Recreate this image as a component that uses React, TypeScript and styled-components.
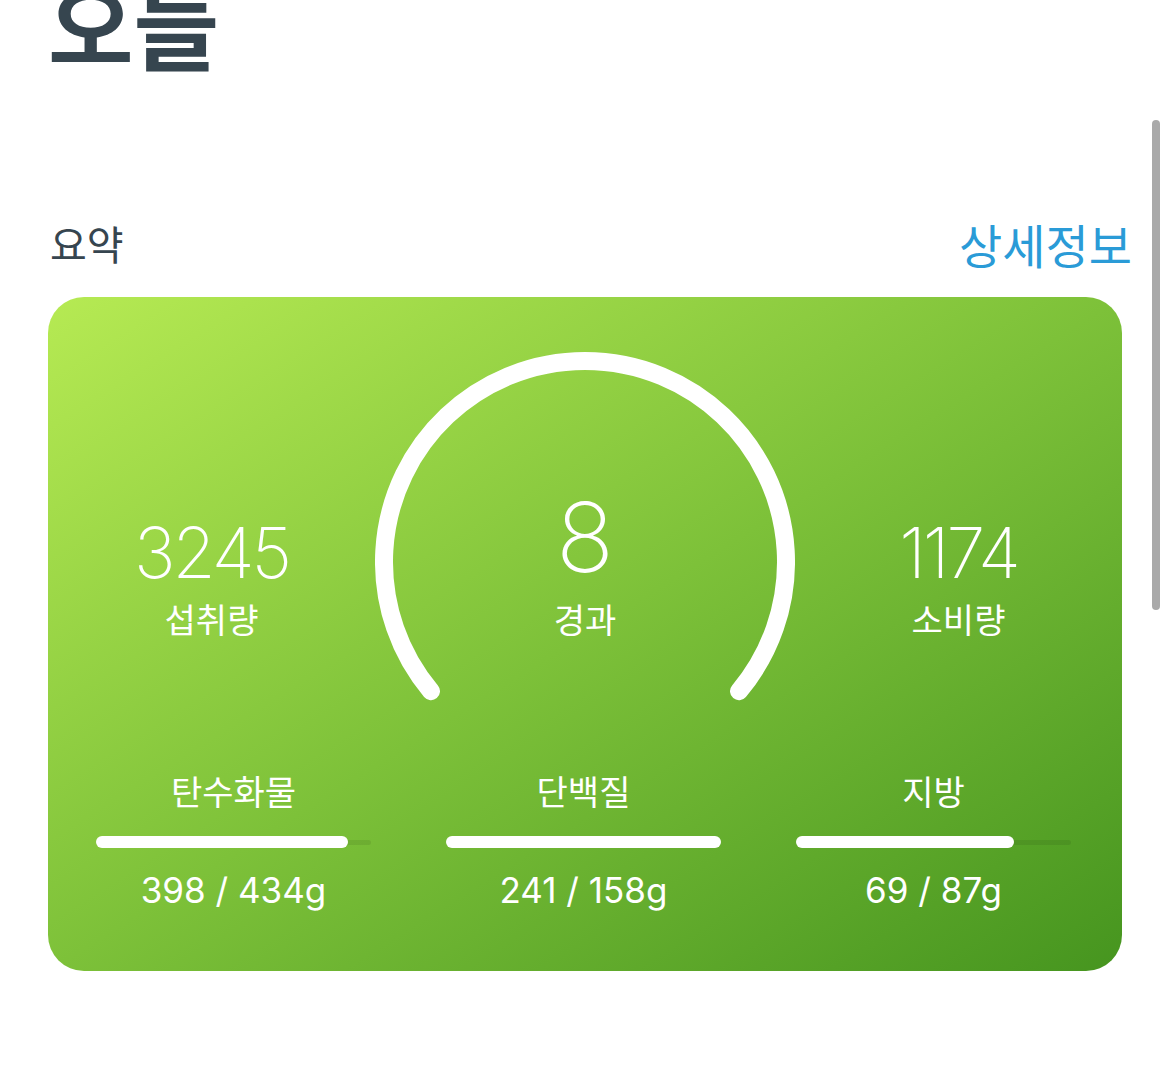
import styled, { createGlobalStyle } from 'styled-components';

const MACROS = [
  { label: '탄수화물', value: 398, goal: 434 },
  { label: '단백질', value: 241, goal: 158 },
  { label: '지방', value: 69, goal: 87 },
];

const GlobalStyle = createGlobalStyle`
  html, body {
    margin: 0;
    padding: 0;
    background: #ffffff;
    overflow: hidden;
  }
  body {
    font-family: Inter, 'Noto Sans CJK KR', sans-serif;
  }
`;

const Gauge = () => (
  <GaugeSvg width={420} height={350} viewBox="0 0 420 350">
    <path
      d="M 56 339.2 A 201 201 0 1 1 364 339.2"
      fill="none"
      stroke="#ffffff"
      strokeWidth={18}
      strokeLinecap="round"
    />
  </GaugeSvg>
);

const App = () => {
  return (
    <>
      <GlobalStyle />
      <Page>
        <Title>오늘</Title>
        <SectionHeader>
          <SectionTitle>요약</SectionTitle>
          <DetailLink>상세정보</DetailLink>
        </SectionHeader>
        <SummaryCard>
          <TopRow>
            <Stat $offset={166}>
              <StatNumber>3245</StatNumber>
              <StatLabel>섭취량</StatLabel>
            </Stat>
            <GaugeBox>
              <Gauge />
              <Stat $offset={137}>
                <StatNumber $big>8</StatNumber>
                <StatLabel>경과</StatLabel>
              </Stat>
            </GaugeBox>
            <Stat $offset={166}>
              <StatNumber>1174</StatNumber>
              <StatLabel>소비량</StatLabel>
            </Stat>
          </TopRow>
          <MacroGrid>
            {MACROS.map((m) => (
              <Macro key={m.label}>
                <MacroLabel>{m.label}</MacroLabel>
                <Track>
                  <Fill style={{ width: `${Math.min(100, (m.value / m.goal) * 100)}%` }} />
                </Track>
                <MacroValue>
                  {m.value} / {m.goal}g
                </MacroValue>
              </Macro>
            ))}
          </MacroGrid>
        </SummaryCard>
      </Page>
      <ScrollIndicator />
    </>
  );
};

export default App;

const Page = styled.main`
  padding: 0 48px;
  display: flex;
  flex-direction: column;
`;

const Title = styled.h1`
  margin: -22px 0 0 0;
  font-family: 'Noto Sans CJK KR', sans-serif;
  font-size: 93px;
  line-height: 92px;
  font-weight: 700;
  color: #36454f;
`;

const SectionHeader = styled.div`
  margin-top: 145px;
  display: flex;
  align-items: center;
  justify-content: space-between;
  height: 56px;
`;

const SectionTitle = styled.h2`
  margin: 0 0 0 2px;
  font-family: 'Noto Sans CJK KR', sans-serif;
  font-size: 40px;
  font-weight: 400;
  color: #36454f;
`;

const DetailLink = styled.a`
  margin-right: -10px;
  font-family: 'Noto Sans CJK KR', sans-serif;
  font-size: 47px;
  font-weight: 400;
  color: #2a9bd7;
  cursor: pointer;
`;

const SummaryCard = styled.section`
  margin-top: 26px;
  border-radius: 36px;
  background: linear-gradient(to bottom right, #b6ea53 0%, #7dc139 50%, #46951f 100%);
  padding: 55px 0 61px;
  color: #ffffff;
`;

const TopRow = styled.div`
  display: flex;
  align-items: flex-start;
`;

const GaugeBox = styled.div`
  position: relative;
  width: 420px;
  height: 350px;
  flex: none;
  display: flex;
  justify-content: center;
`;

const GaugeSvg = styled.svg`
  position: absolute;
  inset: 0;
`;

const Stat = styled.div<{ $offset: number }>`
  position: relative;
  flex: 1;
  padding-top: ${(p) => p.$offset}px;
  display: flex;
  flex-direction: column;
  align-items: center;
`;

const StatNumber = styled.div<{ $big?: boolean }>`
  font-family: Inter, sans-serif;
  font-weight: 200;
  font-size: ${(p) => (p.$big ? 96 : 70)}px;
  line-height: 1;
  letter-spacing: ${(p) => (p.$big ? 0 : -3)}px;
  margin-bottom: ${(p) => (p.$big ? 14 : 11)}px;
`;

const StatLabel = styled.div`
  font-family: 'Noto Sans CJK KR', sans-serif;
  font-size: 34px;
  line-height: 40px;
  font-weight: 400;
`;

const MacroGrid = styled.div`
  margin-top: 69px;
  padding: 0 51px 0 48px;
  display: grid;
  grid-template-columns: repeat(3, 1fr);
  column-gap: 75px;
`;

const Macro = styled.div`
  display: flex;
  flex-direction: column;
  align-items: center;
`;

const MacroLabel = styled.div`
  font-family: 'Noto Sans CJK KR', sans-serif;
  font-size: 34px;
  line-height: 40px;
  font-weight: 400;
`;

const Track = styled.div`
  position: relative;
  margin-top: 25px;
  width: 100%;
  height: 12px;
  display: flex;
  align-items: center;
  &::before {
    content: '';
    width: 100%;
    height: 5px;
    border-radius: 3px;
    background: rgba(0, 0, 0, 0.08);
  }
`;

const Fill = styled.div`
  position: absolute;
  left: 0;
  top: 0;
  height: 12px;
  border-radius: 6px;
  background: #ffffff;
`;

const MacroValue = styled.div`
  margin-top: 22px;
  font-family: Inter, sans-serif;
  font-size: 35px;
  line-height: 40px;
  font-weight: 400;
`;

const ScrollIndicator = styled.div`
  position: fixed;
  top: 120px;
  right: 10px;
  width: 8px;
  height: 490px;
  border-radius: 4px;
  background: #a9a9a9;
`;
